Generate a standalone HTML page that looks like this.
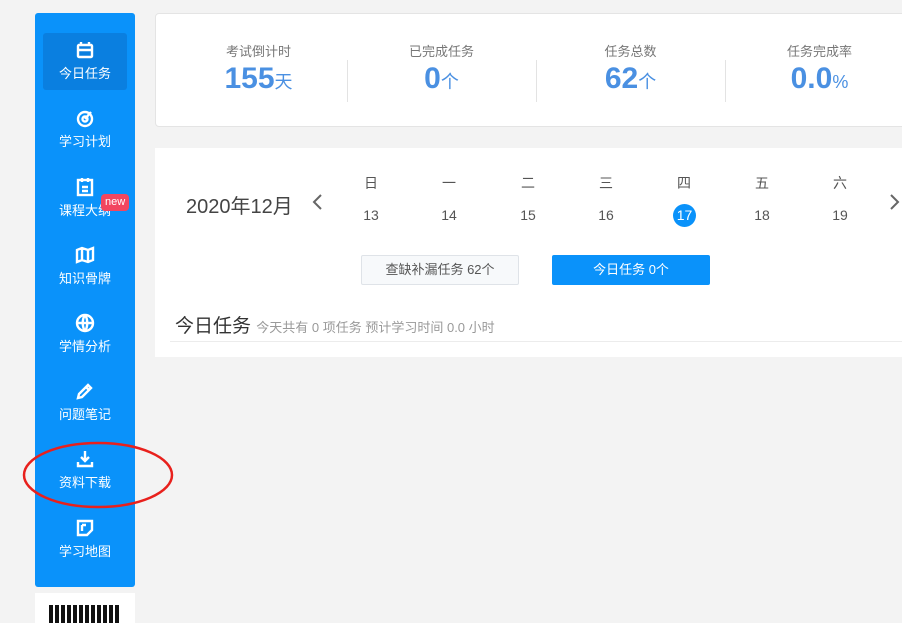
<!DOCTYPE html>
<html><head><meta charset="utf-8"><style>
*{margin:0;padding:0;box-sizing:border-box}
body{width:902px;height:617px;background:#f3f3f3;position:relative;overflow:hidden;font-family:"Liberation Sans","Noto Sans CJK SC",sans-serif}
.side{position:absolute;left:35px;top:13px;width:100px;height:574px;background:#0a92fa;border-radius:3px}
.act{position:absolute;left:8px;top:20px;width:84px;height:57px;background:#0a7fe0;border-radius:3px}
.it{position:absolute;left:0;width:100px;text-align:center;color:#fff;font-size:13px}
.it svg{display:block;margin:0 auto 3px}
.new{position:absolute;left:66px;top:181px;background:#f2465f;color:#fff;font-size:11px;padding:1px 4px;border-radius:4px;line-height:15px}
.qr{position:absolute;left:35px;top:593px;width:100px;height:30px;background:#fff}
.card{position:absolute;left:155px;top:13px;width:760px;height:114px;background:#fff;border:1px solid #e4e4e4;border-radius:4px}
.st{position:absolute;top:27px;width:189px;text-align:center}
.st .l{font-size:13px;color:#777}
.st .v{font-size:30px;font-weight:bold;color:#4a90e2;margin-top:2px}
.st .v span{font-size:18px;font-weight:normal}
.dv{position:absolute;top:46px;width:1px;height:42px;background:#e3e3e3}
.pan{position:absolute;left:155px;top:148px;width:747px;height:209px;background:#fff}
.g{position:absolute;color:#555;font-size:14px;text-align:center;width:40px}
.btn{position:absolute;top:107px;height:30px;width:158px;font-size:13px;text-align:center;line-height:28px;border-radius:2px}
</style></head><body>
<div class="side">
<div class="act"></div>
<div class="it" style="top:27px"><svg width="20" height="20" viewBox="0 0 20 20" fill="none" stroke="#fff" stroke-width="2.4"><rect x="3" y="5" width="14" height="12" rx="1"/><path d="M6 2v4M14 2v4M3 10h14"/></svg>今日任务</div>
<div class="it" style="top:95px"><svg width="20" height="20" viewBox="0 0 20 20" fill="none" stroke="#fff" stroke-width="2.4"><circle cx="10" cy="11" r="7"/><circle cx="10" cy="11" r="2.5"/><path d="M10 11l6-7"/></svg>学习计划</div>
<div class="it" style="top:164px"><svg width="20" height="20" viewBox="0 0 20 20" fill="none" stroke="#fff" stroke-width="2.4"><rect x="3" y="3" width="14" height="15"/><path d="M7 1v4M13 1v4M7 10h6M7 14h6"/></svg>课程大纲</div>
<div class="new">new</div>
<div class="it" style="top:232px"><svg width="20" height="20" viewBox="0 0 20 20" fill="none" stroke="#fff" stroke-width="2.4"><path d="M2 5l5-2 6 2 5-2v12l-5 2-6-2-5 2zM7 3v12M13 5v12"/></svg>知识骨牌</div>
<div class="it" style="top:300px"><svg width="20" height="20" viewBox="0 0 20 20" fill="none" stroke="#fff" stroke-width="2.4"><circle cx="10" cy="10" r="8"/><path d="M2 10h16M10 2c-3 4-3 12 0 16M10 2c3 4 3 12 0 16"/></svg>学情分析</div>
<div class="it" style="top:368px"><svg width="20" height="20" viewBox="0 0 20 20" fill="none" stroke="#fff" stroke-width="2.4"><path d="M3 17l1-4 9-9 3 3-9 9zM11 6l3 3"/></svg>问题笔记</div>
<div class="it" style="top:436px"><svg width="20" height="20" viewBox="0 0 20 20" fill="none" stroke="#fff" stroke-width="2.4"><path d="M10 2v10M6 8l4 4 4-4M3 13v4h14v-4"/></svg>资料下载</div>
<div class="it" style="top:505px"><svg width="20" height="20" viewBox="0 0 20 20" fill="none" stroke="#fff" stroke-width="2.4"><path d="M3 3h14v9l-5 5H3zM7 7v6M7 7h4"/></svg>学习地图</div>
</div>
<div class="qr"><div style="position:absolute;left:14px;top:12px;width:72px;height:18px;background:repeating-linear-gradient(90deg,#111 0 4px,#fff 4px 6px)"></div></div>
<svg style="position:absolute;left:22px;top:440px" width="154" height="72"><ellipse cx="76" cy="35" rx="74" ry="32" fill="none" stroke="#e8201c" stroke-width="2.5"/></svg>
<div class="card">
<div class="st" style="left:8px"><div class="l">考试倒计时</div><div class="v">155<span>天</span></div></div>
<div class="dv" style="left:191px"></div>
<div class="st" style="left:191px"><div class="l">已完成任务</div><div class="v">0<span>个</span></div></div>
<div class="dv" style="left:380px"></div>
<div class="st" style="left:380px"><div class="l">任务总数</div><div class="v">62<span>个</span></div></div>
<div class="dv" style="left:569px"></div>
<div class="st" style="left:569px"><div class="l">任务完成率</div><div class="v">0.0<span>%</span></div></div>
</div>
<div class="pan">
<div style="position:absolute;left:31px;top:42px;font-size:20px;color:#444">2020年12月</div>
<svg style="position:absolute;left:156px;top:45px" width="12" height="18"><path d="M10 2L3 9l7 7" fill="none" stroke="#666" stroke-width="2"/></svg>
<svg style="position:absolute;left:734px;top:45px" width="12" height="18"><path d="M2 2l7 7-7 7" fill="none" stroke="#666" stroke-width="2"/></svg>
<div class="g" style="left:196px;top:25px">日</div><div class="g" style="left:196px;top:59px">13</div>
<div class="g" style="left:274px;top:25px">一</div><div class="g" style="left:274px;top:59px">14</div>
<div class="g" style="left:353px;top:25px">二</div><div class="g" style="left:353px;top:59px">15</div>
<div class="g" style="left:431px;top:25px">三</div><div class="g" style="left:431px;top:59px">16</div>
<div class="g" style="left:509px;top:25px">四</div>
<div style="position:absolute;left:518px;top:56px;width:23px;height:23px;border-radius:50%;background:#0a92fa;color:#fff;font-size:14px;text-align:center;line-height:23px">17</div>
<div class="g" style="left:587px;top:25px">五</div><div class="g" style="left:587px;top:59px">18</div>
<div class="g" style="left:665px;top:25px">六</div><div class="g" style="left:665px;top:59px">19</div>
<div class="btn" style="left:206px;background:#f7f9fb;border:1px solid #dfe3e8;color:#555">查缺补漏任务 62个</div>
<div class="btn" style="left:397px;background:#0a92fa;color:#fff;line-height:30px">今日任务 0个</div>
<div style="position:absolute;left:20px;top:163px;font-size:19px;color:#333">今日任务 <span style="font-size:13px;color:#999">今天共有 0 项任务 预计学习时间 0.0 小时</span></div>
<div style="position:absolute;left:15px;top:193px;width:732px;height:1px;background:#ececec"></div>
</div>
</body></html>
